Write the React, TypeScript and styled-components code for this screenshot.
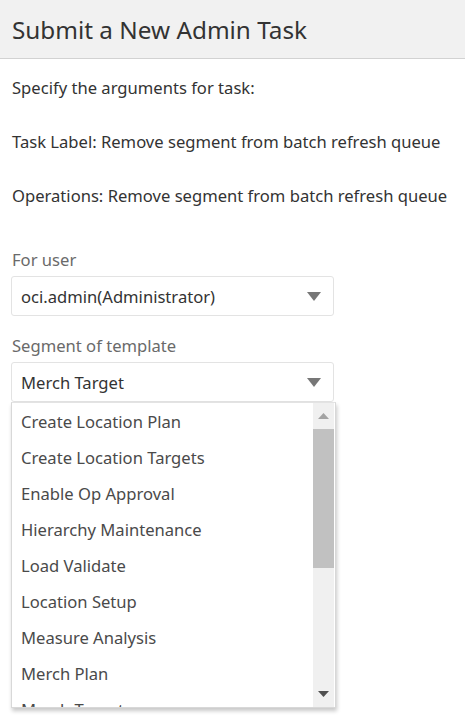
import React from "react";
import styled, { createGlobalStyle } from "styled-components";

const Global = createGlobalStyle`
  html, body { margin: 0; padding: 0; background: #fff; }
  body { font-family: "Noto Sans", "Open Sans", sans-serif; }
`;

const Page = styled.div`
  width: 465px;
  height: 718px;
  overflow: hidden;
  background: #fff;
`;

const Header = styled.div`
  height: 58px;
  background: #f1f1f1;
  border-bottom: 1px solid #d2d2d2;
  display: flex;
  align-items: center;
  padding: 0 12px;
`;

const Title = styled.h1`
  margin: 0;
  font-weight: 400;
  font-size: 24.3px;
  color: #333;
`;

const Body = styled.div`
  padding: 18px 12px 0 12px;
  display: flex;
  flex-direction: column;
`;

const Line = styled.p`
  margin: 0 0 32px 0;
  font-size: 16.6px;
  line-height: 22px;
  color: #333;
  white-space: nowrap;
`;

const Field = styled.div`
  display: flex;
  flex-direction: column;
  width: 323px;
  margin-left: -1px;
  position: relative;
`;

const Label = styled.label`
  font-size: 16.6px;
  line-height: 22px;
  color: #6a6a6a;
  margin-left: 1px;
  margin-bottom: 5px;
`;

const SelectBox = styled.div`
  height: 38px;
  border: 1px solid #e3e3e3;
  border-radius: 3px;
  display: flex;
  align-items: center;
  justify-content: space-between;
  padding: 0 12px 0 9px;
  font-size: 16.6px;
  color: #333;
  background: #fff;
`;

const Caret = styled.svg`
  width: 14px;
  height: 9px;
  fill: #777;
`;

const Gap = styled.div<{ $h: number }>`
  height: ${(p) => p.$h}px;
`;

const Dropdown = styled.div`
  position: absolute;
  top: 100%;
  left: 0;
  width: 323px;
  height: 304px;
  background: #fff;
  border: 1px solid #d8d8d8;
  border-top: 1px solid #e3e3e3;
  box-shadow: 1px 3px 4px rgba(0, 0, 0, 0.22);
  display: flex;
  overflow: hidden;
`;

const List = styled.ul`
  list-style: none;
  margin: 0;
  padding: 0;
  flex: 1;
`;

const Item = styled.li`
  height: 36px;
  display: flex;
  align-items: center;
  padding-left: 9px;
  font-size: 16.6px;
  color: #4a4a4a;
  white-space: nowrap;
`;

const Scrollbar = styled.div`
  width: 21px;
  margin-right: 1px;
  background: #f0f0f0;
  display: flex;
  flex-direction: column;
  align-items: stretch;
`;

const ScrollBtn = styled.div`
  height: 26px;
  display: flex;
  align-items: center;
  justify-content: center;
`;

const Arrow = styled.svg<{ $dark?: boolean }>`
  width: 11px;
  height: 6px;
  fill: ${(p) => (p.$dark ? "#505050" : "#a3a3a3")};
`;

const Thumb = styled.div`
  height: 139px;
  background: #c1c1c1;
`;

const Track = styled.div`
  flex: 1;
`;

const items = [
  "Create Location Plan",
  "Create Location Targets",
  "Enable Op Approval",
  "Hierarchy Maintenance",
  "Load Validate",
  "Location Setup",
  "Measure Analysis",
  "Merch Plan",
  "Merch Target",
];

const DownCaret = () => (
  <Caret viewBox="0 0 14 9">
    <polygon points="0,0 14,0 7,9" />
  </Caret>
);

export default function App() {
  return (
    <Page>
      <Global />
      <Header>
        <Title>Submit a New Admin Task</Title>
      </Header>
      <Body>
        <Line>Specify the arguments for task:</Line>
        <Line>Task Label: Remove segment from batch refresh queue</Line>
        <Line>Operations: Remove segment from batch refresh queue</Line>
        <Gap $h={10} />
        <Field>
          <Label>For user</Label>
          <SelectBox>
            <span>oci.admin(Administrator)</span>
            <DownCaret />
          </SelectBox>
        </Field>
        <Gap $h={19} />
        <Field>
          <Label>Segment of template</Label>
          <SelectBox>
            <span>Merch Target</span>
            <DownCaret />
          </SelectBox>
          <Dropdown>
            <List>
              {items.map((t) => (
                <Item key={t}>{t}</Item>
              ))}
            </List>
            <Scrollbar>
              <ScrollBtn>
                <Arrow viewBox="0 0 11 6">
                  <polygon points="0,6 11,6 5.5,0" />
                </Arrow>
              </ScrollBtn>
              <Thumb />
              <Track />
              <ScrollBtn>
                <Arrow $dark viewBox="0 0 11 6">
                  <polygon points="0,0 11,0 5.5,6" />
                </Arrow>
              </ScrollBtn>
            </Scrollbar>
          </Dropdown>
        </Field>
      </Body>
    </Page>
  );
}
